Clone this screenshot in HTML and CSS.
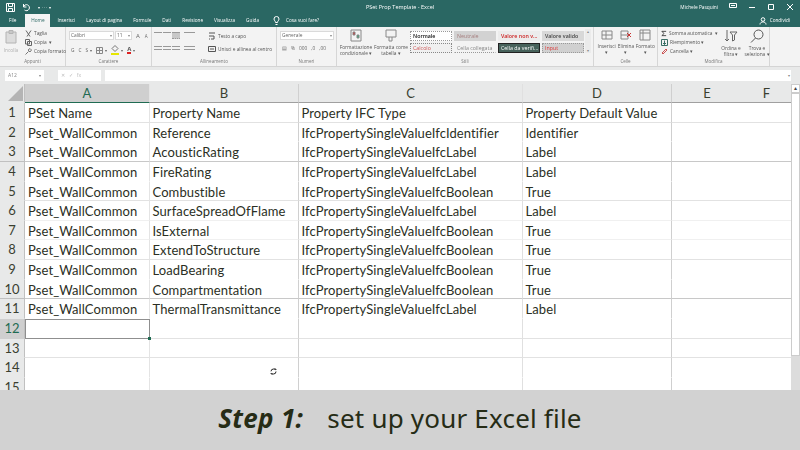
FILE: index.html
```html
<!DOCTYPE html>
<html lang="en">

<head>
    <meta charset="UTF-8">
    <title>PSet Excel</title>
    <link rel="stylesheet" href="styles.css">
</head>

<body>
    <div class="titlebar">
        <div class="quick">
            <svg width="9" height="9" viewBox="0 0 9 9" fill="none" stroke="#fff"><path d="M.5.5h8v8h-8zM2.500.5v3h4v-3M2.500 8.500v-3h4v3"/></svg>
            <svg width="9" height="9" viewBox="0 0 9 9" fill="none" stroke="#fff"><path d="M1.500 1v3h3M1.500 4a3 3 0 1 1 1 3"/></svg>
            <span class="qdots">▾ &nbsp;· · · &nbsp;▾</span>
        </div>
        <div class="doc-title">PSet Prop Template - Excel</div>
        <div class="win">
            <span class="user">Michele Pasquini</span>
            <svg width="8" height="8" viewBox="0 0 8 8" fill="none" stroke="#fff"><path d="M.5.500h7v4h-7zM2 2.500h4"/></svg>
            <svg width="8" height="8" viewBox="0 0 8 8" stroke="#fff"><path d="M1 4.500h6"/></svg>
            <svg width="8" height="8" viewBox="0 0 8 8" fill="none" stroke="#fff"><path d="M1.500 1.500h5v5h-5z"/></svg>
            <svg width="8" height="8" viewBox="0 0 8 8" stroke="#fff"><path d="M1 1l6 6M7 1l-6 6"/></svg>
        </div>
    </div>
    <div class="tabs">
        <span class="tab t-file">File</span>
        <span class="tab active">Home</span>
        <span class="tab">Inserisci</span>
        <span class="tab">Layout di pagina</span>
        <span class="tab">Formule</span>
        <span class="tab">Dati</span>
        <span class="tab">Revisione</span>
        <span class="tab">Visualizza</span>
        <span class="tab">Guida</span>
        <span class="tab tell">
            <svg width="7" height="9" viewBox="0 0 7 9" fill="none" stroke="#fff"><path d="M2.500 6.500C2.500 5 1 4.500 1 3a2.500 2.500 0 0 1 5 0c0 1.500-1.500 2-1.500 3.500zM2.500 8.500h2"/></svg>
            Cosa vuoi fare?
        </span>
        <span class="share">
            <svg width="8" height="8" viewBox="0 0 8 8" fill="none" stroke="#fff"><circle cx="4" cy="2.500" r="1.800"/><path d="M1 7.500c0-3.500 6-3.500 6 0"/></svg>
            Condividi
        </span>
    </div>

    <div class="ribbon">
        <div class="group g-clip">
            <div class="group-body clip">
                <div class="paste">
                    <svg width="12" height="14" viewBox="0 0 12 14" fill="#dcdcdc" stroke="#b4b4b4"><path d="M1 2h10v11H1z"/><path d="M4 .500h4v3H4z" fill="#c8c8c8"/></svg>
                    <span>Incolla</span>
                </div>
                <div class="stack">
                    <span class="line">
                        <svg class="ico" width="7" height="7" viewBox="0 0 7 7" fill="none" stroke="#666"><path d="M1 .500l4 6M6 .500l-4 6"/></svg>Taglia
                    </span>
                    <span class="line">
                        <svg class="ico" width="7" height="7" viewBox="0 0 7 7" fill="none" stroke="#666"><path d="M.500.500h4v4.500h-4zM2.500 2.500h4v4h-4z"/></svg>Copia &nbsp;▾
                    </span>
                    <span class="line">
                        <svg class="ico" width="7" height="7" viewBox="0 0 7 7" fill="none" stroke="#777"><path d="M.500 6.500l3-3M3 2l2 2 1.500-2L5 .500z"/></svg>Copia formato
                    </span>
                </div>
            </div>
            <div class="group-name">Appunti</div>
        </div>

        <div class="group g-font">
            <div class="group-body font-body">
                <div class="font-row">
                    <span class="select w-font">Calibri<b>▾</b></span>
                    <span class="select w-size">11<b>▾</b></span>
                    <span class="glyph big-a">A</span><span class="glyph small">A</span>
                </div>
                <div class="font-row gaps">
                    <span class="glyph">G</span><span class="glyph">C</span><span class="glyph">S</span>
                    <span class="glyph tiny">▾</span>
                    <svg width="7" height="7" viewBox="0 0 7 7" fill="none" stroke="#888"><path d="M.500.500h6v6h-6zM.500 3.500h6M3.500.500v6"/></svg>
                    <span class="glyph tiny">▾</span>
                    <svg class="fill-ico" width="8" height="8" viewBox="0 0 8 8" fill="none" stroke="#777"><path d="M4 .500l3 3-3 3-3-3z"/></svg>
                    <span class="glyph tiny">▾</span>
                    <span class="swatch-font">A</span><span class="glyph tiny">▾</span>
                </div>
            </div>
            <div class="group-name">Carattere</div>
        </div>

        <div class="group g-align">
            <div class="group-body align-body">
                <div class="align-icons">
                    <i class="bars"></i><i class="bars"></i><i class="bars on"></i><i class="bars orient"></i>
                    <i class="bars low"></i><i class="bars low"></i><i class="bars low"></i><i class="bars low orient"></i>
                </div>
                <div class="stack wide">
                    <span class="line">
                        <svg class="ico" width="8" height="8" viewBox="0 0 8 8" fill="none" stroke="#555"><path d="M1 1h6M1 4h5v3H3M1 7h1"/></svg>Testo a capo
                    </span>
                    <span class="line">
                        <svg class="ico" width="8" height="8" viewBox="0 0 8 8" fill="none" stroke="#555"><path d="M.500 1.500h7v5h-7zM2 4h4"/></svg>Unisci e allinea al centro
                    </span>
                </div>
            </div>
            <div class="group-name">Allineamento</div>
        </div>

        <div class="group g-num">
            <div class="group-body num-body">
                <span class="select w-num">Generale<b>▾</b></span>
                <div class="font-row gaps"><span class="glyph">▤</span><span class="glyph">%</span><span class="glyph">000</span><span class="glyph">,0</span><span class="glyph">,00</span></div>
            </div>
            <div class="group-name">Numeri</div>
        </div>

        <div class="group g-styles">
            <div class="group-body styles-body">
                <div class="big-btn b-cond">
                    <svg width="12" height="13" viewBox="0 0 12 13" fill="none" stroke="#888"><path d="M1 1h10v11H1z"/><path d="M3 3h2v3H3z" fill="#c33"/><path d="M7 6h2v3H7z" fill="#3a7"/></svg>
                    <span>Formattazione</span><span>condizionale ▾</span>
                </div>
                <div class="big-btn b-table">
                    <svg width="12" height="13" viewBox="0 0 12 13" fill="none" stroke="#888"><path d="M1 1h10v7H1zM4 8v4h3V8"/></svg>
                    <span>Formatta come</span><span>tabella ▾</span>
                </div>
                <div class="style-grid">
                    <span class="cs normale">Normale</span>
                    <span class="cs neutrale">Neutrale</span>
                    <span class="cs non-valido">Valore non v...</span>
                    <span class="cs valido">Valore valido</span>
                    <span class="cs calcolo">Calcolo</span>
                    <span class="cs collegata">Cella collegata</span>
                    <span class="cs verifica">Cella da verifi...</span>
                    <span class="cs input">Input</span>
                </div>
                <div class="style-scroll"><span>▴</span><span>▾</span></div>
            </div>
            <div class="group-name">Stili</div>
        </div>

        <div class="group g-cells">
            <div class="group-body cells-body">
                <div class="big-btn">
                    <svg width="12" height="12" viewBox="0 0 12 12" fill="none" stroke="#888"><path d="M1 2h10v8H1zM1 6h10M5 2v8"/></svg>
                    <span>Inserisci</span><span>▾</span>
                </div>
                <div class="big-btn">
                    <svg width="12" height="12" viewBox="0 0 12 12" fill="none" stroke="#888"><path d="M1 2h7v8H1zM1 6h7"/><path d="M7 4l4 4M11 4l-4 4" stroke="#c33"/></svg>
                    <span>Elimina</span><span>▾</span>
                </div>
                <div class="big-btn">
                    <svg width="12" height="12" viewBox="0 0 12 12" fill="none" stroke="#888"><path d="M1 1h10v10H1zM4 1v10M1 4h10"/></svg>
                    <span>Formato</span><span>▾</span>
                </div>
            </div>
            <div class="group-name">Celle</div>
        </div>

        <div class="group g-edit">
            <div class="group-body edit-body">
                <div class="stack e-stack">
                    <span class="line">
                        <svg class="ico" width="7" height="7" viewBox="0 0 7 7" fill="none" stroke="#333"><path d="M6 1H1l2.500 2.500L1 6h5"/></svg>Somma automatica &nbsp;▾
                    </span>
                    <span class="line">
                        <svg class="ico" width="7" height="7" viewBox="0 0 7 7" fill="none" stroke="#3a6f66"><path d="M.500.500h6v6h-6zM3.500 1.500v4M2 4l1.500 1.500L5 4"/></svg>Riempimento ▾
                    </span>
                    <span class="line">
                        <svg class="ico" width="7" height="7" viewBox="0 0 7 7" fill="none" stroke="#c55"><path d="M1 5l4-4 1 1-4 4z"/></svg>Cancella ▾
                    </span>
                </div>
                <div class="big-btn b-sort">
                    <svg width="14" height="14" viewBox="0 0 14 14" fill="none" stroke="#666"><path d="M3 1v11M1 10l2 2 2-2M6 3h7l-2.500 3v5L8.500 12V6z"/></svg>
                    <span>Ordina e</span><span>filtra ▾</span>
                </div>
                <div class="big-btn">
                    <svg width="14" height="14" viewBox="0 0 14 14" fill="none" stroke="#555"><circle cx="8.500" cy="5.500" r="4.500"/><path d="M5.500 9l-4.500 4.500"/></svg>
                    <span>Trova e</span><span>seleziona ▾</span>
                </div>
            </div>
            <div class="group-name">Modifica</div>
        </div>
    </div>

    <div class="formula-bar">
        <div class="name-box">A12<b>▾</b></div>
        <div class="fx-box">✕ &nbsp; ✓ &nbsp; fx</div>
        <div class="formula-input"><b>▾</b></div>
    </div>

    <div class="sheet">
        <div class="grid-area">
            <div class="row head">
                <div class="rh corner"></div>
                <div class="ch col-a on">A</div>
                <div class="ch col-b">B</div>
                <div class="ch col-c">C</div>
                <div class="ch col-d">D</div>
                <div class="ch col-e">E</div>
                <div class="ch col-f">F</div>
            </div>
            <div class="row"><div class="rh">1</div><div class="c col-a">PSet Name</div><div class="c col-b">Property Name</div><div class="c col-c">Property IFC Type</div><div class="c col-d">Property Default Value</div><div class="c col-e"></div><div class="c col-f"></div></div>
            <div class="row no-line"><div class="rh">2</div><div class="c col-a">Pset_WallCommon</div><div class="c col-b">Reference</div><div class="c col-c">IfcPropertySingleValueIfcIdentifier</div><div class="c col-d">Identifier</div><div class="c col-e"></div><div class="c col-f"></div></div>
            <div class="row dark-line"><div class="rh">3</div><div class="c col-a">Pset_WallCommon</div><div class="c col-b">AcousticRating</div><div class="c col-c">IfcPropertySingleValueIfcLabel</div><div class="c col-d">Label</div><div class="c col-e"></div><div class="c col-f"></div></div>
            <div class="row no-line"><div class="rh">4</div><div class="c col-a">Pset_WallCommon</div><div class="c col-b">FireRating</div><div class="c col-c">IfcPropertySingleValueIfcLabel</div><div class="c col-d">Label</div><div class="c col-e"></div><div class="c col-f"></div></div>
            <div class="row"><div class="rh">5</div><div class="c col-a">Pset_WallCommon</div><div class="c col-b">Combustible</div><div class="c col-c">IfcPropertySingleValueIfcBoolean</div><div class="c col-d">True</div><div class="c col-e"></div><div class="c col-f"></div></div>
            <div class="row faint"><div class="rh">6</div><div class="c col-a">Pset_WallCommon</div><div class="c col-b">SurfaceSpreadOfFlame</div><div class="c col-c">IfcPropertySingleValueIfcLabel</div><div class="c col-d">Label</div><div class="c col-e"></div><div class="c col-f"></div></div>
            <div class="row faint"><div class="rh">7</div><div class="c col-a">Pset_WallCommon</div><div class="c col-b">IsExternal</div><div class="c col-c">IfcPropertySingleValueIfcBoolean</div><div class="c col-d">True</div><div class="c col-e"></div><div class="c col-f"></div></div>
            <div class="row"><div class="rh">8</div><div class="c col-a">Pset_WallCommon</div><div class="c col-b">ExtendToStructure</div><div class="c col-c">IfcPropertySingleValueIfcBoolean</div><div class="c col-d">True</div><div class="c col-e"></div><div class="c col-f"></div></div>
            <div class="row no-line"><div class="rh">9</div><div class="c col-a">Pset_WallCommon</div><div class="c col-b">LoadBearing</div><div class="c col-c">IfcPropertySingleValueIfcBoolean</div><div class="c col-d">True</div><div class="c col-e"></div><div class="c col-f"></div></div>
            <div class="row dark-line"><div class="rh">10</div><div class="c col-a">Pset_WallCommon</div><div class="c col-b">Compartmentation</div><div class="c col-c">IfcPropertySingleValueIfcBoolean</div><div class="c col-d">True</div><div class="c col-e"></div><div class="c col-f"></div></div>
            <div class="row no-line"><div class="rh">11</div><div class="c col-a">Pset_WallCommon</div><div class="c col-b">ThermalTransmittance</div><div class="c col-c">IfcPropertySingleValueIfcLabel</div><div class="c col-d">Label</div><div class="c col-e"></div><div class="c col-f"></div></div>
            <div class="row"><div class="rh on">12</div><div class="c col-a selected"></div><div class="c col-b"></div><div class="c col-c"></div><div class="c col-d"></div><div class="c col-e"></div><div class="c col-f"></div></div>
            <div class="row"><div class="rh">13</div><div class="c col-a"></div><div class="c col-b"></div><div class="c col-c"></div><div class="c col-d"></div><div class="c col-e"></div><div class="c col-f"></div></div>
            <div class="row no-line"><div class="rh">14</div><div class="c col-a"></div><div class="c col-b"></div><div class="c col-c"></div><div class="c col-d"></div><div class="c col-e"></div><div class="c col-f"></div></div>
            <div class="row no-line"><div class="rh">15</div><div class="c col-a"></div><div class="c col-b"></div><div class="c col-c"></div><div class="c col-d"></div><div class="c col-e"></div><div class="c col-f"></div></div>
            <svg class="cursor" width="7" height="7" viewBox="0 0 7 7" fill="none" stroke="#222"><circle cx="3.500" cy="3.500" r="2.500" stroke-dasharray="5.500 2.350"/><path d="M5 0v1.500h1.500M2 7V5.500H.5" stroke-width=".8"/></svg>
        </div>
        <div class="scrollbar"><span class="arrow">▴</span><span class="thumb"></span></div>
    </div>

    <div class="caption"><b>Step 1:</b><span>set up your Excel file</span></div>
</body>

</html>
```

FILE: styles.css
```css
* {
    box-sizing: border-box;
}

html,
body {
    margin: 0;
    height: 450px;
    overflow: hidden;
}

body {
    width: 800px;
    font-family: 'Open Sans', 'Liberation Sans', sans-serif;
    background: #e8e9e9;
    color: #222;
    display: flex;
    flex-direction: column;
}

/* the source is a scaled down gif, small ui text is soft */
.quick,
.doc-title,
.win,
.tab,
.share,
.group-body,
.group-name,
.name-box,
.fx-box {
    filter: blur(0.3px);
}

/* title + tabs */
.titlebar {
    height: 14px;
    padding: 0 6px;
    background: #2a6763;
    color: #fff;
    display: flex;
    align-items: center;
    font-size: 4.800px;
}

.quick,
.win {
    flex: 1 1 0;
    display: flex;
    align-items: center;
}

.quick {
    gap: 7px;
}

.qdots {
    font-size: 4px;
}

.doc-title {
    white-space: nowrap;
    font-size: 5.500px;
}

.win {
    justify-content: flex-end;
    gap: 11px;
}

.tabs {
    height: 13px;
    background: #2a6763;
    color: #fff;
    font-size: 4.700px;
    display: flex;
    padding-left: 9px;
}

.tab {
    margin-right: 11px;
    line-height: 13px;
    white-space: nowrap;
}

.t-file {
    margin-right: 9px;
}

.tab.active {
    background: #f4f4f4;
    color: #2a6763;
    width: 25px;
    text-align: center;
    margin-right: 7px;
}

.tell {
    display: flex;
    align-items: center;
    gap: 6px;
    margin-left: 3px;
}

.share {
    margin-left: auto;
    margin-right: 10px;
    display: flex;
    gap: 3px;
    align-items: center;
    line-height: 13px;
}

/* ribbon */
.ribbon {
    height: 40px;
    background: #f3f3f3;
    display: flex;
    font-size: 4.800px;
    color: #555;
    border-bottom: 1px solid #d4d4d4;
}

.group {
    display: flex;
    flex-direction: column;
    border-right: 1px solid #d6d6d6;
    padding: 2px 2px 0;
    flex: none;
}

.group-body {
    height: 29px;
    display: flex;
}

.group-name {
    text-align: center;
    font-size: 4.500px;
    line-height: 7px;
    color: #777;
}

.g-clip { width: 66px; }
.g-font { width: 86px; }
.g-align { width: 125px; }
.g-num { width: 60px; }
.g-styles { width: 257px; }
.g-cells { width: 64px; }
.g-edit { width: 112px; }

.clip {
    gap: 7px;
}

.paste {
    display: flex;
    flex-direction: column;
    align-items: center;
    gap: 3px;
    color: #b0b0b0;
    padding-left: 2px;
    padding-top: 1px;
    width: 16px;
}

.stack {
    display: flex;
    flex-direction: column;
    gap: 2px;
    white-space: nowrap;
    line-height: 7px;
    padding-top: 1px;
}

.stack.wide {
    gap: 5px;
    padding-top: 3px;
}

.line {
    display: flex;
    align-items: center;
    gap: 2px;
}

.font-body,
.num-body {
    flex-direction: column;
    gap: 3px;
    padding-left: 1px;
    padding-top: 2px;
}

.font-row {
    display: flex;
    align-items: center;
    gap: 1px;
}

.font-row.gaps {
    gap: 4px;
    padding-left: 2px;
    padding-top: 2px;
}

.select {
    height: 9px;
    background: #fff;
    border: 1px solid #dadada;
    line-height: 7px;
    padding: 0 1px;
    display: flex;
    justify-content: space-between;
    color: #666;
}

.select b,
.name-box b,
.formula-input b {
    font-weight: 400;
    font-size: 4px;
    color: #888;
}

.w-font { width: 45px; }
.w-size { width: 17px; }
.w-num { width: 54px; }

.glyph {
    color: #666;
    white-space: nowrap;
}

.big-a {
    margin-left: 3px;
    margin-right: 4px;
    font-size: 6px;
}

.glyph.small {
    font-size: 4.500px;
}

.glyph.tiny {
    font-size: 3.500px;
    margin-left: -2px;
}

.fill-ico {
    border-bottom: 2px solid #e6e600;
    height: 10px;
}

.swatch-font {
    border-bottom: 2px solid #d22;
    line-height: 6px;
    font-weight: 700;
    font-size: 6px;
}

.align-body {
    gap: 2px;
}

.align-icons {
    width: 52px;
    display: grid;
    grid-template-columns: 8px 8px 8px 14px;
    grid-auto-rows: 8px;
    gap: 6px 1px;
    padding-top: 3px;
}

.bars {
    border-top: 1px solid #999;
    height: 3px;
}

.bars.low {
    height: 4px;
    border-bottom: 1px solid #999;
}

.bars.on {
    background: #c8c8c8;
    height: 7px;
    border-top: 1px solid #999;
    border-bottom: 1px dotted #999;
}

.bars.orient {
    margin-left: 3px;
}

.styles-body {
    gap: 0;
}

.big-btn {
    display: flex;
    flex-direction: column;
    align-items: center;
    line-height: 6px;
    white-space: nowrap;
    color: #555;
    width: 20px;
}

.big-btn svg {
    margin-bottom: 2px;
    flex: none;
}

.b-cond {
    width: 34px;
}

.b-table {
    width: 36px;
}

.style-grid {
    display: grid;
    grid-template-columns: repeat(4, 42px);
    grid-template-rows: 10px 10px;
    gap: 2px;
    margin-left: 1px;
    padding-top: 2px;
}

.cs {
    font-size: 5.300px;
    line-height: 8px;
    padding-left: 2px;
    white-space: nowrap;
    overflow: hidden;
    border: 1px solid transparent;
}

.normale { background: #fff; border: 1px dotted #999; color: #111; font-weight: 600; }
.neutrale { background: #d2d2d2; color: #a57d7d; }
.non-valido { background: #ececec; color: #c22; font-weight: 600; }
.valido { background: #d8d8d8; color: #444; font-weight: 600; }
.calcolo { background: #f0f0f0; color: #c55; border: 1px dotted #888; }
.collegata { background: #f3f3f3; color: #888; border-bottom: 1px dotted #999; }
.verifica { background: #47625b; color: #fff; border: 1px solid #222; }
.input { background: #d0d0d0; color: #d33; border: 1px dotted #999; }

.style-scroll {
    display: flex;
    flex-direction: column;
    justify-content: space-between;
    width: 6px;
    margin-left: 1px;
    font-size: 4px;
    color: #888;
    background: #ebebeb;
    height: 24px;
    text-align: center;
}

.cells-body {
    gap: 0;
    padding-left: 1px;
}

.edit-body {
    gap: 3px;
}

.e-stack {
    width: 58px;
    padding-left: 1px;
}

.b-sort {
    width: 22px;
    margin-right: 3px;
}

/* formula bar */
.formula-bar {
    height: 17px;
    padding: 3px 9px 0 5px;
    display: flex;
    font-size: 5px;
    color: #888;
}

.name-box,
.fx-box,
.formula-input {
    height: 11px;
    background: #fff;
    line-height: 11px;
    padding: 0 3px;
}

.name-box {
    width: 39px;
    display: flex;
    justify-content: space-between;
}

.fx-box {
    width: 43px;
    color: #bbb;
    margin: 0 4px 0 14px;
}

.formula-input {
    flex: 1;
    display: flex;
    justify-content: flex-end;
    padding-right: 1px;
}

/* sheet */
.sheet {
    display: flex;
    height: 306px;
    background: #fff;
    overflow: hidden;
}

.grid-area {
    flex: 1;
    position: relative;
    overflow: hidden;
}

.row {
    display: flex;
    height: 19.650px;
}

.row.head {
    height: 19px;
}

.rh {
    width: 25px;
    flex: none;
    background: #e8e9e9;
    border-right: 1px solid #c0c0c0;
    border-bottom: 1px solid transparent;
    text-align: center;
    font: 13px/19px 'Lato', sans-serif;
    color: #3a3f30;
}

.dark-line .rh {
    border-bottom-color: #c0c0c0;
}

.rh.on {
    background: #cfcfcf;
    color: #1f6b52;
}

.corner {
    position: relative;
}

.corner::after {
    content: '';
    position: absolute;
    right: 1px;
    bottom: 1px;
    width: 15px;
    height: 15px;
    background: #b4b4b4;
    clip-path: polygon(100% 0, 100% 100%, 0 100%);
}

.ch {
    background: #e8e9e9;
    border-right: 1px solid #c6c6c6;
    border-bottom: 1px solid #a0a0a0;
    text-align: center;
    font: 13px/18px 'Lato', sans-serif;
    color: #3a3f30;
}

.ch.on {
    background: #cfcfcf;
    color: #1f6b52;
    border-bottom: 1px solid #1f6b52;
}

.c {
    border-right: 1px solid #dcdcdc;
    border-bottom: 1px solid #e2e2e2;
    padding-left: 2.500px;
    font: 13px/20px 'Lato', sans-serif;
    letter-spacing: 0.100px;
    color: #2b2f24;
    white-space: nowrap;
    overflow: hidden;
}

/* the gif dropped or darkened some of the row lines */
.no-line .c {
    border-bottom-color: transparent;
}

.faint .c {
    border-bottom-color: #f0f0f0;
}

.dark-line .c {
    border-bottom-color: #c8c8c8;
}

.col-a { width: 125px; flex: none; border-right-color: #e4e4e4; }
.col-b { width: 149px; flex: none; border-right-color: #d0d0d0; }
.col-c { width: 224px; flex: none; border-right-color: #e0e0e0; }
.col-d { width: 149px; flex: none; border-right-color: #cfcfcf; }
.col-e { width: 70px; flex: none; border-right: 0; }
.col-f { width: 49px; flex: none; border-right: 0; }

.c.col-a {
    padding-left: 3px;
}

.c.selected {
    border: 1px solid #8f8f8f;
    position: relative;
    overflow: visible;
}

.selected::after {
    content: '';
    position: absolute;
    right: -2px;
    bottom: -2px;
    width: 3px;
    height: 3px;
    background: #1f6b52;
}

.cursor {
    position: absolute;
    left: 270px;
    top: 284px;
}

.scrollbar {
    width: 9px;
    flex: none;
    background: #dcdcdc;
    display: flex;
    flex-direction: column;
}

.arrow {
    height: 9px;
    font-size: 6px;
    line-height: 7px;
    text-align: center;
    background: #fff;
    border: 1px solid #ccc;
    color: #444;
}

.thumb {
    height: 263px;
    background: #fff;
    border: 1px solid #ccc;
}

/* step caption */
.caption {
    flex: 1;
    background: #d2d2d2;
    color: #262c16;
    display: flex;
    align-items: center;
    justify-content: center;
    gap: 24px;
    padding-bottom: 4px;
    font-family: 'Noto Sans', 'Open Sans', sans-serif;
    font-size: 26px;
}

.caption b {
    font-style: italic;
    font-weight: 700;
    letter-spacing: 0.300px;
}

.caption span {
    letter-spacing: 0.200px;
}
```
